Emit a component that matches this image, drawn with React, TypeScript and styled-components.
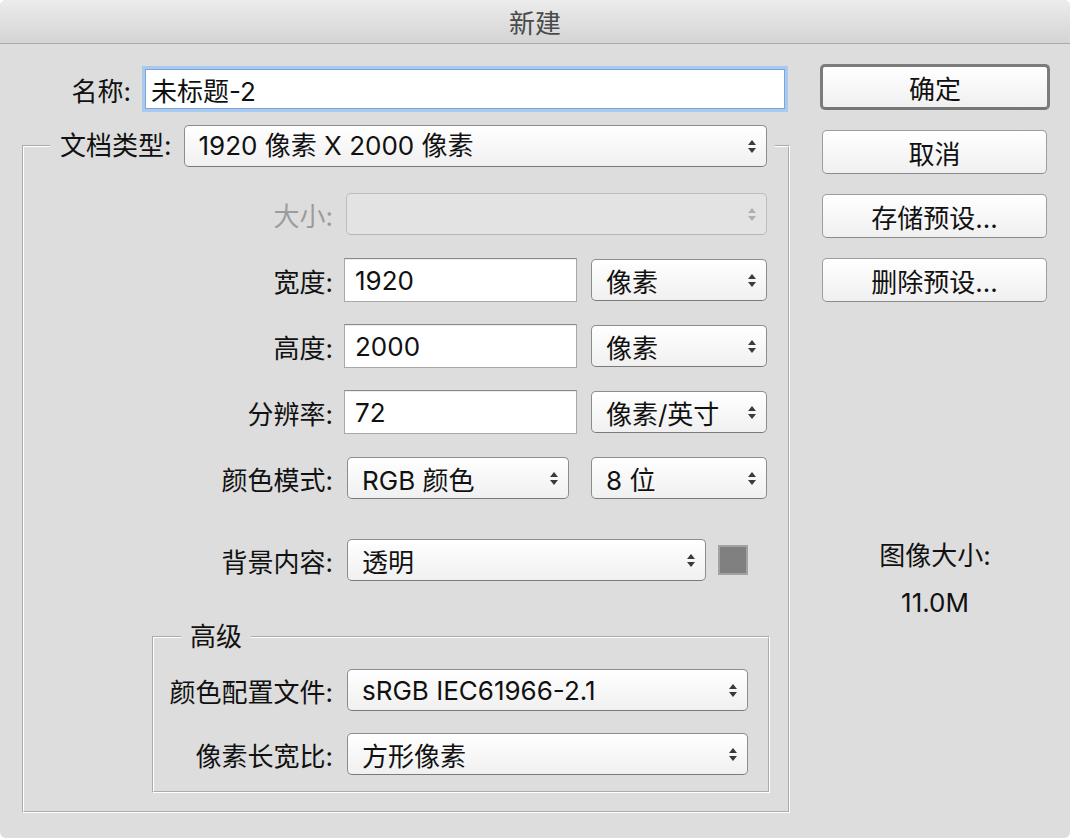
import React from "react";
import styled, { createGlobalStyle } from "styled-components";

const FONT = `"Inter", "Noto Sans CJK SC", sans-serif`;

const GlobalStyle = createGlobalStyle`
  html, body { margin: 0; padding: 0; background: #ffffff; }
  body { font-family: ${FONT}; }
  * { box-sizing: border-box; }
`;

const Window = styled.div`
  width: 1070px;
  height: 838px;
  background: #dddddd;
  border-radius: 6px;
  overflow: hidden;
  display: flex;
  flex-direction: column;
  font-family: ${FONT};
  font-size: 26px;
  color: #111111;
`;

const TitleBar = styled.div`
  height: 44px;
  flex: none;
  display: flex;
  align-items: center;
  justify-content: center;
  background: linear-gradient(#ececec, #d4d4d4);
  border-bottom: 1px solid #ababab;
  color: #4a4a4a;
  font-size: 26px;
`;

const Body = styled.div`
  display: flex;
  gap: 30px;
  padding-left: 22px;
`;

const LeftColumn = styled.div`
  width: 768px;
  display: flex;
  flex-direction: column;
  padding-top: 22px;
`;

const RightColumn = styled.div`
  width: 230px;
  display: flex;
  flex-direction: column;
  padding-top: 20px;
`;

const NameRow = styled.div`
  display: flex;
  align-items: center;
  height: 46px;
`;

const NameLabel = styled.label`
  width: 109px;
  text-align: right;
  flex: none;
  white-space: nowrap;
`;

const TextField = styled.input<{ $w: number; $focus?: boolean }>`
  width: ${(p) => p.$w}px;
  height: ${(p) => (p.$focus ? 40 : 44)}px;
  margin-left: ${(p) => (p.$focus ? 14 : 0)}px;
  padding: 0 ${(p) => (p.$focus ? 5 : 10)}px;
  font-family: ${FONT};
  font-size: 26px;
  color: #111111;
  background: #ffffff;
  border: 1px solid ${(p) => (p.$focus ? "#7aa6dc" : "#a8a8a8")};
  border-top-color: ${(p) => (p.$focus ? "#7aa6dc" : "#8a8a8a")};
  border-radius: 0;
  outline: none;
  box-shadow: ${(p) => (p.$focus ? "0 0 0 3px #a9c9ef" : "inset 0 1px 0 #ececec")};
  flex: none;
`;

const Group = styled.fieldset<{ $inner?: boolean }>`
  margin: ${(p) => (p.$inner ? "41px 18px 18px 128px" : "13px 0 0 0")};
  padding: 0;
  min-width: 0;
  border: 2px groove #ffffff;
`;

const Legend = styled.legend<{ $inner?: boolean }>`
  display: flex;
  align-items: center;
  gap: 12px;
  margin-left: ${(p) => (p.$inner ? 27 : 26)}px;
  padding: ${(p) => (p.$inner ? "0 9px" : "0 8px 0 10px")};
  height: ${(p) => (p.$inner ? 28 : 42)}px;
  line-height: 28px;
`;

const Rows = styled.div<{ $inner?: boolean }>`
  display: flex;
  flex-direction: column;
  gap: ${(p) => (p.$inner ? 20 : 22)}px;
  padding: ${(p) => (p.$inner ? "17px 0 15px 0" : "25px 21px 0 0")};
`;

const Row = styled.div<{ $inner?: boolean; $extra?: number }>`
  display: grid;
  grid-template-columns: ${(p) => (p.$inner ? "179px 401px" : "309px 423px")};
  column-gap: ${(p) => (p.$inner ? 14 : 11)}px;
  align-items: center;
  height: 44px;
  margin-top: ${(p) => p.$extra ?? 0}px;
`;

const FieldLabel = styled.label<{ $dim?: boolean }>`
  text-align: right;
  white-space: nowrap;
  color: ${(p) => (p.$dim ? "#9c9c9c" : "#111111")};
`;

const Controls = styled.div<{ $spread?: boolean }>`
  display: flex;
  align-items: center;
  justify-content: ${(p) => (p.$spread ? "space-between" : "flex-start")};
  gap: 12px;
`;

const SelectBox = styled.div<{ $w: number; $inset?: number; $disabled?: boolean }>`
  width: ${(p) => p.$w}px;
  height: 42px;
  margin-left: ${(p) => p.$inset ?? 0}px;
  flex: none;
  display: flex;
  align-items: center;
  justify-content: space-between;
  padding: 0 9px 0 14px;
  border: 1px solid ${(p) => (p.$disabled ? "#bdbdbd" : "#8d8d8d")};
  border-bottom-color: ${(p) => (p.$disabled ? "#b5b5b5" : "#7a7a7a")};
  border-radius: 5px;
  background: ${(p) => (p.$disabled ? "#e3e3e3" : "linear-gradient(#ffffff, #f0f0f0)")};
  color: #111111;
  white-space: nowrap;
`;

const ArrowSvg = styled.svg<{ $dim?: boolean }>`
  flex: none;
  fill: ${(p) => (p.$dim ? "#b0b0b0" : "#3a3a3a")};
`;

const Arrows = ({ dim }: { dim?: boolean }) => (
  <ArrowSvg $dim={dim} width="10" height="15" viewBox="0 0 10 15">
    <path d="M1 6 L5 1 L9 6 Z" />
    <path d="M1 9 L5 14 L9 9 Z" />
  </ArrowSvg>
);

const Select = ({
  value,
  w,
  inset,
  disabled,
}: {
  value: string;
  w: number;
  inset?: number;
  disabled?: boolean;
}) => (
  <SelectBox $w={w} $inset={inset} $disabled={disabled}>
    <span>{value}</span>
    <Arrows dim={disabled} />
  </SelectBox>
);

const Swatch = styled.div`
  width: 30px;
  height: 30px;
  flex: none;
  background: #808080;
  border: 2px solid #a2a2a2;
`;

const ButtonStack = styled.div`
  display: flex;
  flex-direction: column;
  gap: 20px;
`;

const Button = styled.button<{ $default?: boolean }>`
  width: ${(p) => (p.$default ? 230 : 225)}px;
  height: ${(p) => (p.$default ? 46 : 44)}px;
  margin-left: ${(p) => (p.$default ? 0 : 2)}px;
  border: ${(p) => (p.$default ? "3px solid #7c7c7c" : "1px solid #9d9d9d")};
  border-bottom-color: ${(p) => (p.$default ? "#767676" : "#8a8a8a")};
  border-radius: 5px;
  background: linear-gradient(#ffffff, #f0f0f0);
  font-family: ${FONT};
  font-size: 26px;
  color: #111111;
  padding: 0;
  cursor: default;
`;

const InfoBlock = styled.div`
  margin-top: 239px;
  display: flex;
  flex-direction: column;
  align-items: center;
  gap: 17px;
  line-height: 30px;
`;

export default function App() {
  return (
    <>
      <GlobalStyle />
      <Window>
        <TitleBar>新建</TitleBar>
        <Body>
          <LeftColumn>
            <NameRow>
              <NameLabel>名称:</NameLabel>
              <TextField $w={640} $focus defaultValue="未标题-2" />
            </NameRow>

            <Group>
              <Legend>
                <span>文档类型:</span>
                <Select value="1920 像素 X 2000 像素" w={583} />
              </Legend>
              <Rows>
                <Row>
                  <FieldLabel $dim>大小:</FieldLabel>
                  <Controls>
                    <Select value="" w={421} inset={2} disabled />
                  </Controls>
                </Row>
                <Row>
                  <FieldLabel>宽度:</FieldLabel>
                  <Controls $spread>
                    <TextField $w={233} defaultValue="1920" />
                    <Select value="像素" w={176} />
                  </Controls>
                </Row>
                <Row>
                  <FieldLabel>高度:</FieldLabel>
                  <Controls $spread>
                    <TextField $w={233} defaultValue="2000" />
                    <Select value="像素" w={176} />
                  </Controls>
                </Row>
                <Row>
                  <FieldLabel>分辨率:</FieldLabel>
                  <Controls $spread>
                    <TextField $w={233} defaultValue="72" />
                    <Select value="像素/英寸" w={176} />
                  </Controls>
                </Row>
                <Row>
                  <FieldLabel>颜色模式:</FieldLabel>
                  <Controls $spread>
                    <Select value="RGB 颜色" w={222} inset={3} />
                    <Select value="8 位" w={176} />
                  </Controls>
                </Row>
                <Row $extra={16}>
                  <FieldLabel>背景内容:</FieldLabel>
                  <Controls>
                    <Select value="透明" w={359} inset={3} />
                    <Swatch />
                  </Controls>
                </Row>
              </Rows>

              <Group $inner>
                <Legend $inner>高级</Legend>
                <Rows $inner>
                  <Row $inner>
                    <FieldLabel>颜色配置文件:</FieldLabel>
                    <Select value="sRGB IEC61966-2.1" w={401} />
                  </Row>
                  <Row $inner>
                    <FieldLabel>像素长宽比:</FieldLabel>
                    <Select value="方形像素" w={401} />
                  </Row>
                </Rows>
              </Group>
            </Group>
          </LeftColumn>

          <RightColumn>
            <ButtonStack>
              <Button $default>确定</Button>
              <Button>取消</Button>
              <Button>存储预设...</Button>
              <Button>删除预设...</Button>
            </ButtonStack>
            <InfoBlock>
              <span>图像大小:</span>
              <span>11.0M</span>
            </InfoBlock>
          </RightColumn>
        </Body>
      </Window>
    </>
  );
}
